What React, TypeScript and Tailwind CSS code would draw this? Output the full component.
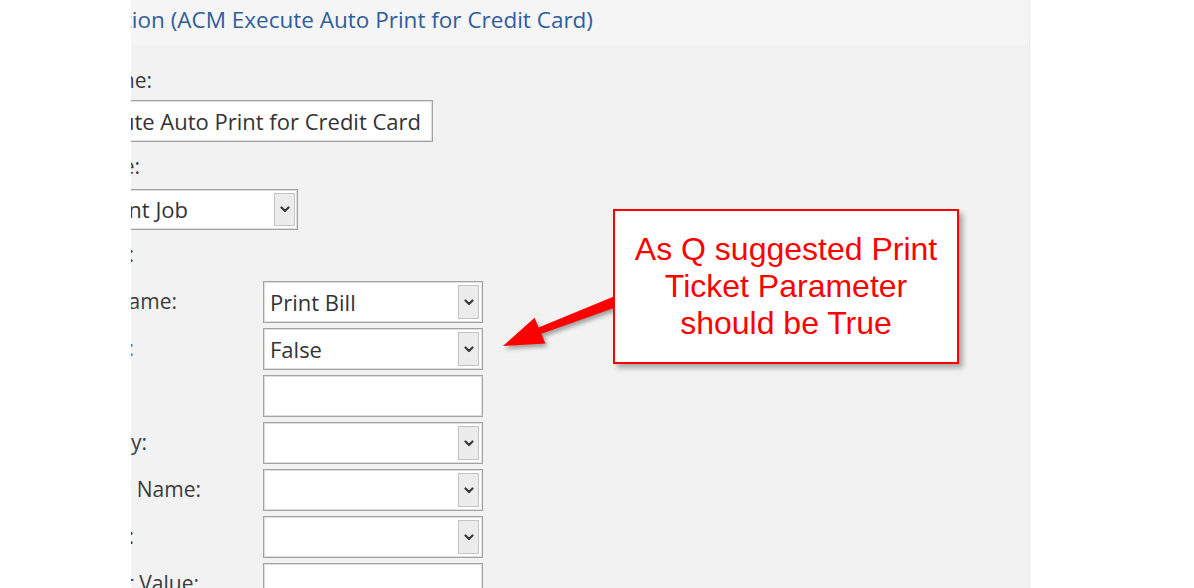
import { ReactNode } from 'react';

const font = { fontFamily: '"Open Sans", "Noto Sans", sans-serif' };

function Chevron() {
  return (
    <svg width="10" height="7" viewBox="0 0 10 7" fill="none">
      <path d="M1.5 1.5 L5 5 L8.5 1.5" stroke="#3a3a3a" strokeWidth="2.2" strokeLinecap="round" strokeLinejoin="round" />
    </svg>
  );
}

// clipped text: overflows to the left so only its tail is visible
function Tail({ width, className = '', children }: { width: number; className?: string; children: ReactNode }) {
  return (
    <div className={`flex shrink-0 justify-end overflow-hidden ${className}`} style={{ width }}>
      <span className="shrink-0 whitespace-nowrap">{children}</span>
    </div>
  );
}

function Select({ value }: { value?: string }) {
  return (
    <div className="flex h-[42px] w-[220px] items-stretch border border-[#a3a3a3] bg-white shadow-[inset_0_0_0_1px_#dedede]">
      <div className="flex flex-1 items-center pl-[6px] text-[22px] text-[#333333]">{value}</div>
      <div className="my-[3px] mr-[3px] flex w-[21px] items-center justify-center border border-[#c4c4c4] bg-[#ececec]">
        <Chevron />
      </div>
    </div>
  );
}

function TextBox() {
  return <div className="h-[42px] w-[220px] border border-[#a3a3a3] bg-white shadow-[inset_0_0_0_1px_#dedede]" />;
}

const rows = [
  { label: 'Print Job Name:', w: 46, box: <Select value="Print Bill" /> },
  { label: 'Print Ticket:', w: 3, box: <Select value="False" />, blue: true },
  { label: '', w: 3, box: <TextBox /> },
  { label: 'Print Job Property:', w: 16, box: <Select /> },
  { label: 'Parameter Name:', w: 70, box: <Select /> },
  { label: 'Parameter:', w: 3, box: <Select /> },
  { label: 'Parameter Value:', w: 68, box: <TextBox /> },
];

export default function App() {
  return (
    <div className="relative flex h-[588px] w-[1194px] overflow-hidden bg-white" style={font}>
      <div className="w-[131px] shrink-0 bg-white" />

      <div className="flex w-[899px] shrink-0 flex-col overflow-hidden border-r border-[#e9e9e9] bg-[#f2f2f2]">
        <div className="flex h-[45px] shrink-0 items-center bg-[#f5f5f5] pb-[6px]">
          <Tail width={462} className="text-[22.5px] text-[#2f5d9c]">
            Action (ACM Execute Auto Print for Credit Card)
          </Tail>
        </div>

        <div className="mt-[21px] flex h-[30px] shrink-0 items-center">
          <Tail width={21} className="text-[21px] text-[#3b3b3b]">Name:</Tail>
        </div>
        <div className="ml-[-10px] mt-[4px] flex h-[42px] w-[312px] shrink-0 items-center border border-[#a3a3a3] bg-white pr-[11px] shadow-[inset_0_0_0_1px_#dedede]">
          <div className="flex flex-1 justify-end overflow-hidden text-[22px] text-[#333333]">
            <span className="shrink-0 whitespace-nowrap">ACM Execute Auto Print for Credit Card</span>
          </div>
        </div>

        <div className="mt-[10px] flex h-[30px] shrink-0 items-center">
          <Tail width={9} className="text-[21px] text-[#3b3b3b]">Type:</Tail>
        </div>
        <div className="ml-[-10px] mt-[7px] flex h-[41px] w-[177px] shrink-0 items-stretch border border-[#a3a3a3] bg-white shadow-[inset_0_0_0_1px_#dedede]">
          <Tail width={66} className="items-center text-[22px] text-[#333333]">Print Job</Tail>
          <div className="flex-1" />
          <div className="my-[3px] mr-[2px] flex w-[21px] items-center justify-center border border-[#c4c4c4] bg-[#ececec]">
            <Chevron />
          </div>
        </div>

        <div className="mt-[10px] flex h-[30px] shrink-0 items-center">
          <Tail width={3} className="text-[21px] text-[#3b3b3b]">Parameters:</Tail>
        </div>

        <div className="mt-[11px] flex shrink-0 flex-col gap-[5px]">
          {rows.map((r, i) => (
            <div key={i} className="flex h-[42px] shrink-0 items-center">
              <div className="w-[132px] shrink-0">
                {r.label && (
                  <Tail width={r.w} className={`text-[21px] ${r.blue ? 'text-[#3d7cc9]' : 'text-[#3b3b3b]'}`}>
                    {r.label}
                  </Tail>
                )}
              </div>
              {r.box}
            </div>
          ))}
        </div>
      </div>

      <div className="flex-1 bg-white" />

      {/* annotation arrow */}
      <svg className="pointer-events-none absolute left-0 top-0" width="1194" height="588" viewBox="0 0 1194 588">
        <polygon
          points="503,346 534.6,317.7 538.6,327.4 613.9,296.4 618.1,306.6 541.4,333.8 545.4,343.5"
          fill="#ff0000"
          style={{ filter: 'drop-shadow(2px 3px 2px rgba(0,0,0,0.35))' }}
        />
      </svg>

      {/* annotation callout */}
      <div
        className="absolute left-[613px] top-[209px] flex h-[155px] w-[346px] items-center justify-center border-2 border-[#ff0000] bg-white text-center text-[32px] leading-[37px] text-[#ff0000] shadow-[4px_4px_5px_rgba(0,0,0,0.3)]"
        style={{ fontFamily: '"Liberation Sans", Arial, sans-serif' }}
      >
        <p>
          As Q suggested Print
          <br />
          Ticket Parameter
          <br />
          should be True
        </p>
      </div>
    </div>
  );
}
